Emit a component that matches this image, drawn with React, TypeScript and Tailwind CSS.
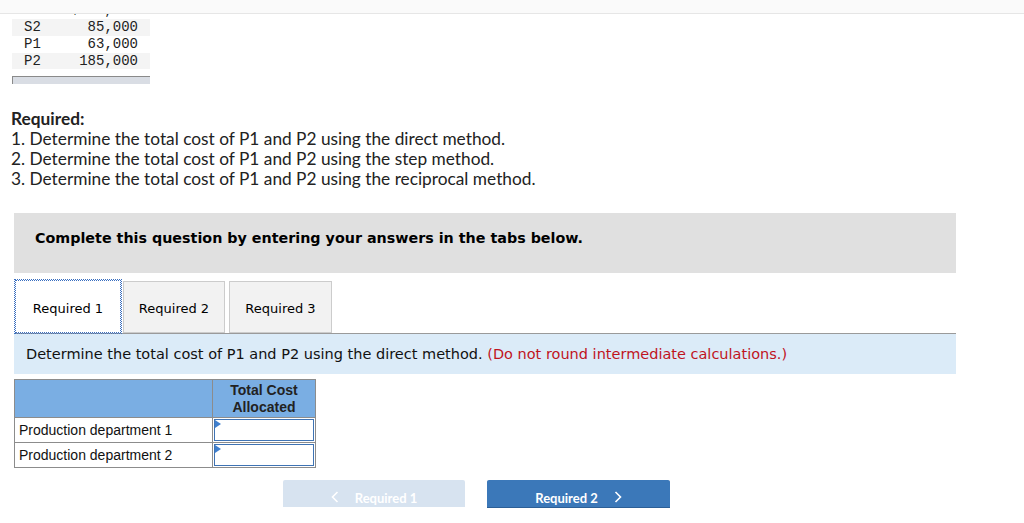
import React from 'react';

const dataRows: [string, string][] = [
  ['S1', '$155,000'],
  ['S2', '85,000'],
  ['P1', '63,000'],
  ['P2', '185,000'],
];

const requiredItems = [
  '1. Determine the total cost of P1 and P2 using the direct method.',
  '2. Determine the total cost of P1 and P2 using the step method.',
  '3. Determine the total cost of P1 and P2 using the reciprocal method.',
];

const verdana = { fontFamily: '"DejaVu Sans", Verdana, sans-serif' };

function Chevron({ dir }: { dir: 'left' | 'right' }) {
  return (
    <svg width="8" height="12" viewBox="0 0 8 12" fill="none" stroke="currentColor" strokeWidth="1.6">
      {dir === 'left' ? <path d="M6.5 1 1.5 6l5 5" /> : <path d="M1.5 1l5 5-5 5" />}
    </svg>
  );
}

function InputCell() {
  return (
    <td className="relative border border-[#8c8c8c] p-0">
      <div className="relative m-px h-[22px] border border-[#3f73b3] bg-white">
        <span className="absolute left-0 top-0 h-0 w-0 border-y-[4px] border-l-[6px] border-y-transparent border-l-[#3f7fce]" />
      </div>
    </td>
  );
}

export default function App(): React.ReactElement {
  return (
    <div className="relative h-[523px] w-[1024px] overflow-hidden bg-white text-black">
      <div className="h-[14px] border-b border-[#e6e6e6] bg-[#fafafa]" />

      {/* scrolled data table */}
      <div className="ml-[12px] h-[55px] w-[138px] overflow-hidden">
        <div className="-mt-[12px]" style={{ fontFamily: '"Liberation Mono", "Courier New", monospace' }}>
          {dataRows.map(([label, value], i) => (
            <div
              key={label}
              className={`flex h-[17px] items-center text-[14px] leading-[17px] text-[#222] ${
                i % 2 === 1 ? 'bg-[#f4f4f4]' : 'bg-white'
              }`}
            >
              <span className="w-[50px] pl-[12px]">{label}</span>
              <span className="w-[76px] text-right">{value}</span>
            </div>
          ))}
        </div>
      </div>
      <div className="ml-[12px] mt-[7px] h-[8px] w-[138px] border-l border-t border-[#8a8a8a] bg-[#d9dde4]" />

      {/* required list */}
      <div
        className="ml-[11px] mt-[25px] text-[17.3px] leading-[20px] text-[#222]"
        style={{ fontFamily: 'Lato, "Open Sans", sans-serif' }}
      >
        <div className="font-bold">Required:</div>
        {requiredItems.map((t) => (
          <div key={t}>{t}</div>
        ))}
      </div>

      {/* instructions */}
      <div
        className="ml-[14px] mt-[24px] h-[60px] w-[942px] bg-[#e0e0e0] pl-[21px] pt-[16px] text-[14.3px] font-bold leading-[18px]"
        style={verdana}
      >
        Complete this question by entering your answers in the tabs below.
      </div>

      {/* tabs */}
      <div className="ml-[14px] mt-[7px] w-[942px]" style={verdana}>
        <div className="flex items-end gap-[2px] pl-[1px]">
          <div className="flex h-[53px] w-[106px] items-center justify-center border border-dotted border-[#3a6fc0] bg-white pt-[4px] text-[13px] outline outline-1 outline-dotted outline-[#3a6fc0]">
            Required 1
          </div>
          <div className="flex h-[52px] w-[102px] items-center justify-center border border-[#cccccc] bg-[#f2f2f2] pt-[3px] text-[13px]">
            Required 2
          </div>
          <div className="ml-[2px] flex h-[52px] w-[103px] items-center justify-center border border-[#cccccc] bg-[#f2f2f2] pt-[3px] text-[13px]">
            Required 3
          </div>
        </div>
        <div className="flex h-[41px] items-center border-t border-[#9a9a9a] bg-[#dbebf8] pl-[12px] pt-[1px] text-[14.5px] text-[#111]">
          Determine the total cost of P1 and P2 using the direct method.&nbsp;
          <span className="text-[#c0141e]">(Do not round intermediate calculations.)</span>
        </div>
      </div>

      {/* answer table */}
      <table
        className="ml-[14px] mt-[5px] border-collapse text-[14px]"
        style={{ fontFamily: '"Liberation Sans", Arial, sans-serif' }}
      >
        <thead>
          <tr className="h-[38px] bg-[#7aaee3]">
            <th className="w-[198px] border border-[#8c8c8c]" />
            <th className="w-[103px] border border-[#8c8c8c] text-center font-bold leading-[17px] text-[#222]">
              Total Cost
              <br />
              Allocated
            </th>
          </tr>
        </thead>
        <tbody>
          {['Production department 1', 'Production department 2'].map((name) => (
            <tr key={name} className="h-[25px]">
              <td className="border border-[#8c8c8c] pl-[4px] text-[#111]">{name}</td>
              <InputCell />
            </tr>
          ))}
        </tbody>
      </table>

      {/* navigation */}
      <div
        className="ml-[283px] mt-[12px] flex gap-[22px] text-[13px] font-bold leading-[16px] text-white"
        style={{ fontFamily: 'Lato, Inter, sans-serif' }}
      >
        <div className="flex h-[27px] w-[182px] items-start justify-center gap-[16px] rounded-t-[2px] bg-[#d7e3f0] pt-[11px]">
          <Chevron dir="left" />
          <span className="-mt-[1px]">Required 1</span>
        </div>
        <div className="flex h-[27px] w-[183px] items-start justify-center gap-[16px] rounded-t-[2px] bg-[#3b78b9] pt-[11px] shadow-[0_1px_0_#2c5f96]">
          <span className="-mt-[1px]">Required 2</span>
          <Chevron dir="right" />
        </div>
      </div>
    </div>
  );
}
